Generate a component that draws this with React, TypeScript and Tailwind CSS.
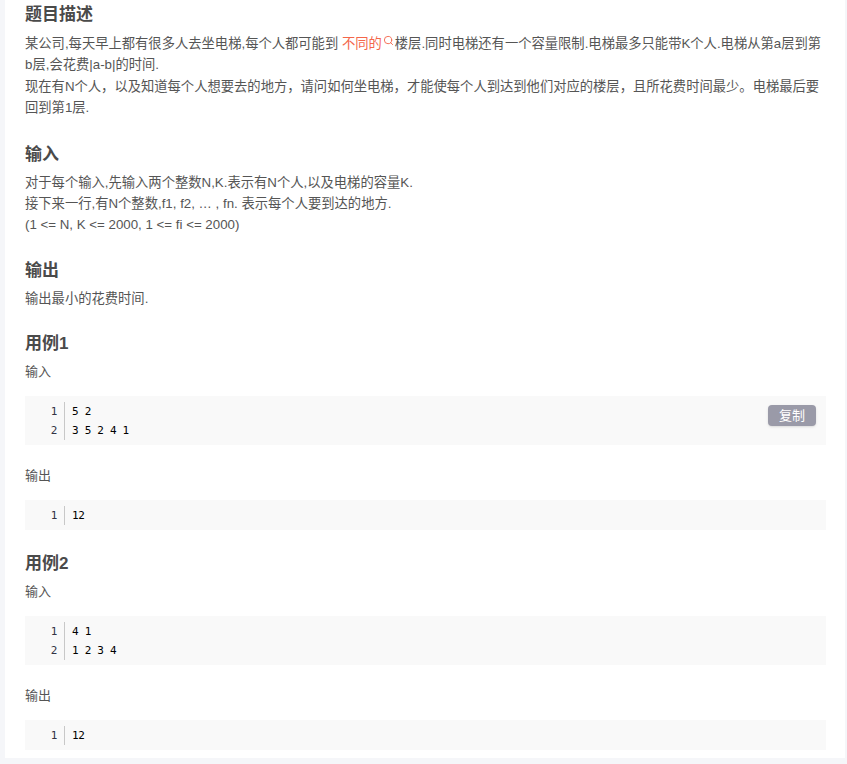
import { Search } from "lucide-react";

function CodeBlock({ lines, copy }: { lines: string[]; copy?: boolean }) {
  return (
    <div className="relative w-[801px] bg-[#f9f9f9] py-[6px] pb-[5px]">
      <div className="flex font-['DejaVu_Sans_Mono',monospace] text-[11px] leading-[19px] tracking-[-0.3px] text-black">
        <div className="w-[40px] border-r border-[#c8c8c8] pr-[7px] text-right text-[#334]">
          {lines.map((_, i) => (
            <div key={i}>{i + 1}</div>
          ))}
        </div>
        <div className="pl-[7px] whitespace-pre">
          {lines.map((l) => (
            <div key={l}>{l}</div>
          ))}
        </div>
      </div>
      {copy && (
        <div className="absolute right-[10px] top-[9px] flex h-[21px] w-[48px] items-center justify-center rounded-[4px] bg-[#9a9aa8] text-[13px] text-white shadow-sm">
          复制
        </div>
      )}
    </div>
  );
}

function Example({ title, input, copy }: { title: string; input: string[]; copy?: boolean }) {
  return (
    <div className="mb-[21px]">
      <h3 className="text-[17px] leading-[26px] font-bold text-[#4a4a4a]">{title}</h3>
      <p className="mt-[5px] mb-[14px] text-[13px] leading-[20px]">输入</p>
      <CodeBlock lines={input} copy={copy} />
      <p className="mt-[25px] mb-[18px] text-[13px] leading-[12px]">输出</p>
      <CodeBlock lines={["12"]} />
    </div>
  );
}

export default function App() {
  return (
    <div className="h-[764px] w-[847px] overflow-hidden bg-[#f5f6f9] pl-[5px] pr-[2px] font-['Liberation_Sans','Noto_Sans_CJK_SC',sans-serif]">
      <div className="h-[758px] bg-white pl-[20px] text-[13.3px] leading-[21.4px] text-[#555]">
        <h3 className="pt-[2px] text-[17px] leading-[26px] font-bold text-[#4a4a4a]">题目描述</h3>
        <p className="mt-[5px] w-[801px]">
          某公司,每天早上都有很多人去坐电梯,每个人都可能到{" "}
          <span className="text-[#f4664a]">不同的</span>
          <Search className="mb-[7px] ml-[1px] mr-[1px] inline h-[11px] w-[11px] text-[#f4664a]" />
          楼层.同时电梯还有一个容量限制.电梯最多只能带K个人.电梯从第a层到第b层,会花费|a-b|的时间.
          <br />
          现在有N个人，以及知道每个人想要去的地方，请问如何坐电梯，才能使每个人到达到他们对应的楼层，且所花费时间最少。电梯最后要回到第1层.
        </p>
        <h3 className="mt-[23px] text-[17px] leading-[26px] font-bold text-[#4a4a4a]">输入</h3>
        <p className="mt-[4px]">
          对于每个输入,先输入两个整数N,K.表示有N个人,以及电梯的容量K.
          <br />
          接下来一行,有N个整数,f1, f2, … , fn. 表示每个人要到达的地方.
          <br />
          (1 &lt;= N, K &lt;= 2000, 1 &lt;= fi &lt;= 2000)
        </p>
        <h3 className="mt-[22px] text-[17px] leading-[26px] font-bold text-[#4a4a4a]">输出</h3>
        <p className="mt-[4px] mb-[22px]">输出最小的花费时间.</p>
        <Example title="用例1" input={["5 2", "3 5 2 4 1"]} copy />
        <Example title="用例2" input={["4 1", "1 2 3 4"]} />
      </div>
    </div>
  );
}
